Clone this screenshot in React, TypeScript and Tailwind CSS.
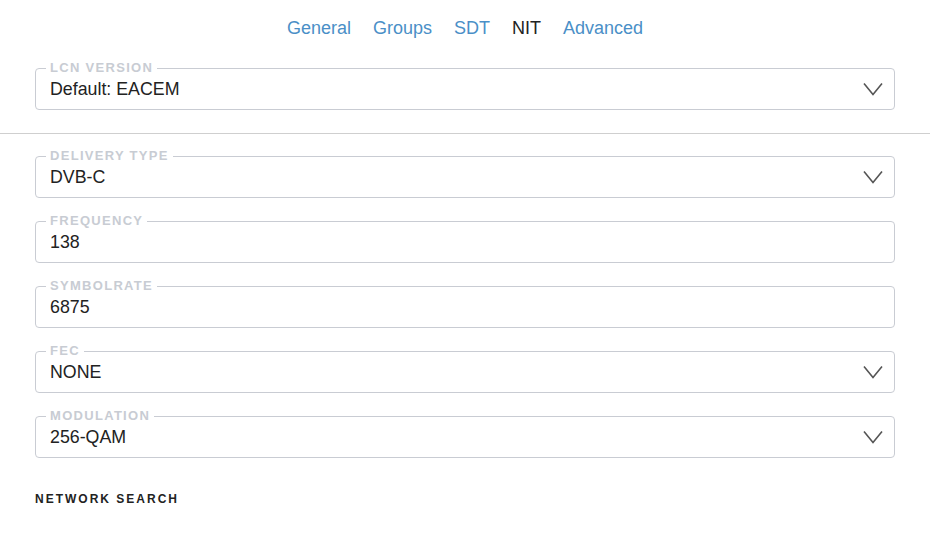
import React from "react";

const font = { fontFamily: '"Liberation Sans", Arial, sans-serif' };

function Chevron() {
  return (
    <svg width="20" height="14" viewBox="0 0 20 14" className="shrink-0">
      <polyline points="1,1.5 10,12.5 19,1.5" fill="none" stroke="#555" strokeWidth="1.6" />
    </svg>
  );
}

function Field({ label, value, select }: { label: string; value: string; select?: boolean }) {
  return (
    <fieldset className="border border-[#c9ccd3] rounded-[4px] pl-[10px] pr-[11px] pb-[10px] pt-0 m-0 min-w-0">
      <legend className="ml-0 px-[4px] text-[13px] leading-[14px] font-bold tracking-[1.3px] text-[#c8ccd3]">
        {label}
      </legend>
      <div className="flex items-center justify-between h-[20px] mt-[4px] pl-[4px]">
        <span className="text-[17.8px] leading-[20px] text-[#222]">{value}</span>
        {select && <Chevron />}
      </div>
    </fieldset>
  );
}

export default function App() {
  const tabs = ["General", "Groups", "SDT", "NIT", "Advanced"];
  return (
    <div style={font} className="w-[930px] h-[535px] bg-white overflow-hidden">
      <nav className="flex justify-center gap-[22px] pt-[17px] h-[51px]">
        {tabs.map((t) => (
          <span key={t} className={`text-[18px] leading-[22px] ${t === "NIT" ? "text-[#222]" : "text-[#4a8fc7]"}`}>
            {t}
          </span>
        ))}
      </nav>
      <div className="px-[35px] pt-[10px]">
        <Field label="LCN VERSION" value="Default: EACEM" select />
      </div>
      <div className="border-t border-[#cfcfcf] mt-[23px]" />
      <div className="px-[35px] pt-[15px] flex flex-col gap-[16px]">
        <Field label="DELIVERY TYPE" value="DVB-C" select />
        <Field label="FREQUENCY" value="138" />
        <Field label="SYMBOLRATE" value="6875" />
        <Field label="FEC" value="NONE" select />
        <Field label="MODULATION" value="256-QAM" select />
      </div>
      <div className="px-[35px] pt-[32px] text-[12px] font-bold tracking-[2px] text-[#222]">NETWORK SEARCH</div>
    </div>
  );
}
